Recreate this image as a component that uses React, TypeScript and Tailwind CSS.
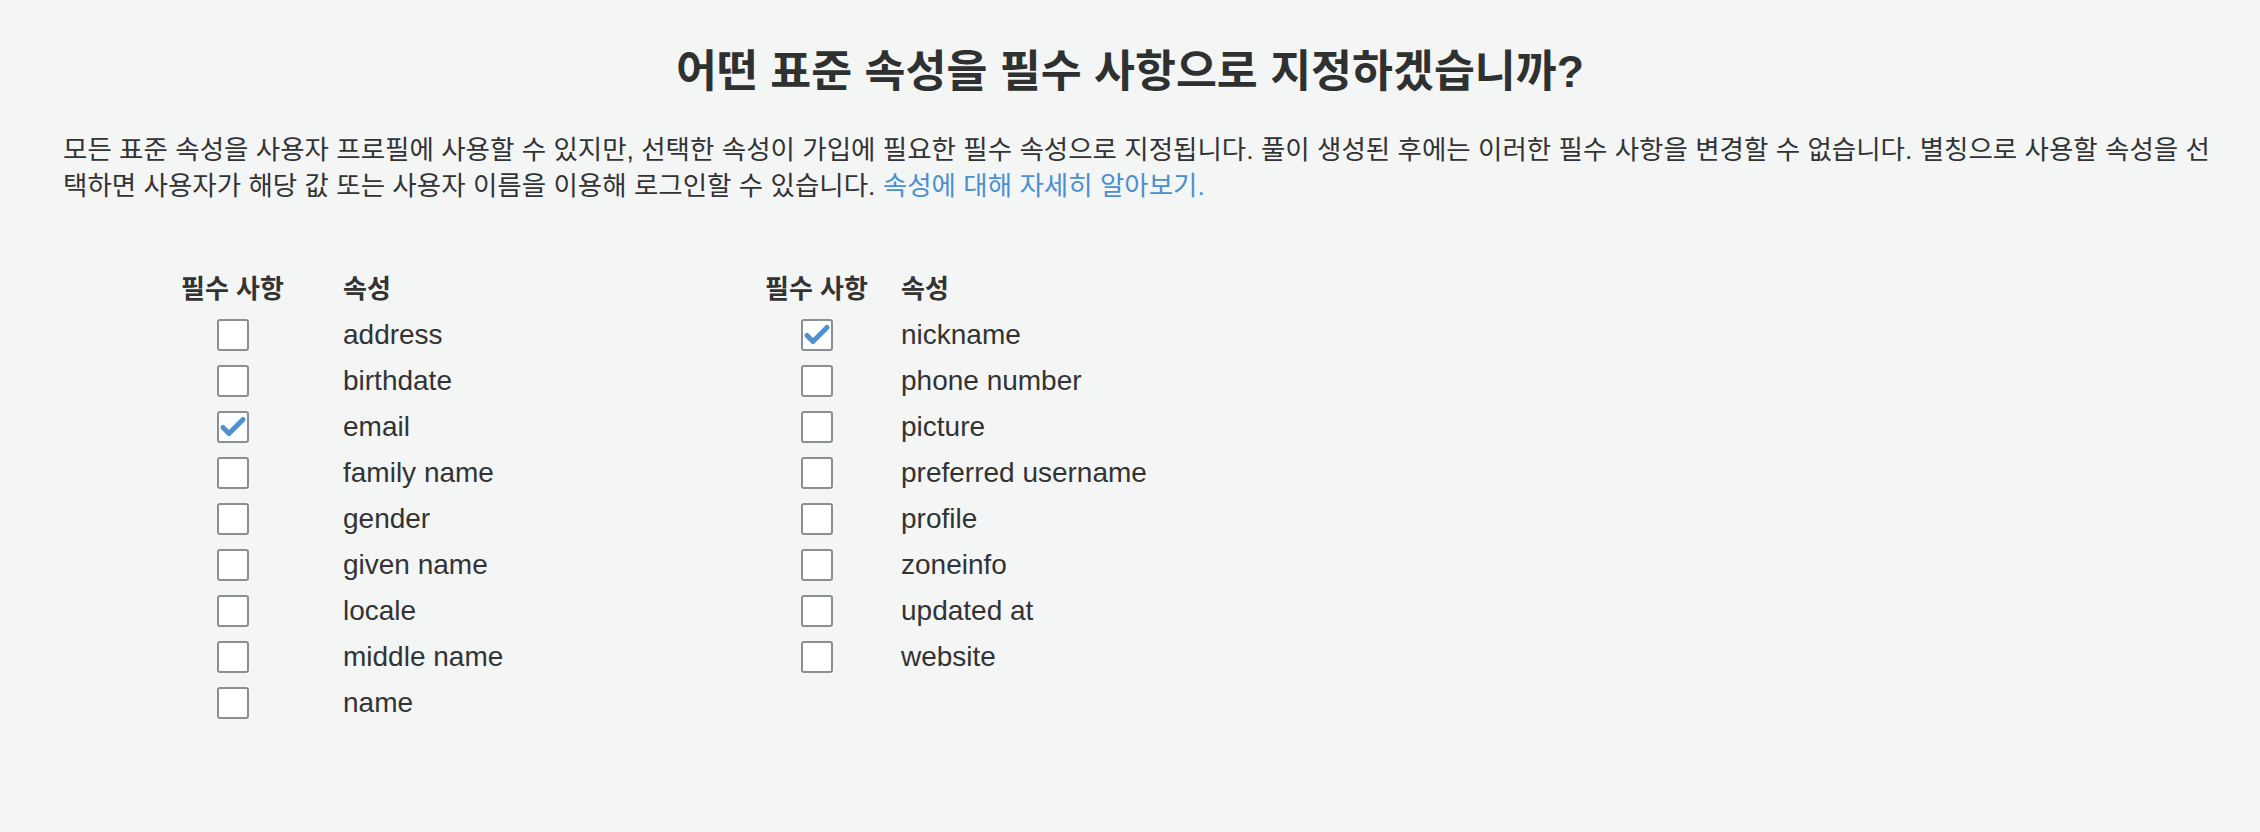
import React from "react";

const left: [string, boolean][] = [
  ["address", false],
  ["birthdate", false],
  ["email", true],
  ["family name", false],
  ["gender", false],
  ["given name", false],
  ["locale", false],
  ["middle name", false],
  ["name", false],
];

const right: [string, boolean][] = [
  ["nickname", true],
  ["phone number", false],
  ["picture", false],
  ["preferred username", false],
  ["profile", false],
  ["zoneinfo", false],
  ["updated at", false],
  ["website", false],
];

function Box({ checked }: { checked: boolean }) {
  return (
    <div className="w-[32px] h-[32px] rounded-[3px] border-2 border-[#8b8e92] bg-white flex items-center justify-center">
      {checked && (
        <svg width="28" height="28" viewBox="0 0 28 28" fill="none">
          <path d="M4 14.5 L10 20.5 L24 6.5" stroke="#4d91d0" strokeWidth="5" strokeLinecap="round" strokeLinejoin="round" />
        </svg>
      )}
    </div>
  );
}

function AttrTable({ rows, col1 }: { rows: [string, boolean][]; col1: string }) {
  return (
    <div className="flex flex-col">
      <div className="flex h-[46px] items-center">
        <div className={`${col1} text-[26px] font-bold font-['Liberation_Sans','Noto_Sans_CJK_KR',sans-serif]`}>필수 사항</div>
        <div className="text-[26px] font-bold font-['Liberation_Sans','Noto_Sans_CJK_KR',sans-serif]">속성</div>
      </div>
      {rows.map(([name, checked]) => (
        <div key={name} className="flex h-[46px] items-center">
          <div className={`${col1} flex`}>
            <div className="w-[104px] flex justify-center">
              <Box checked={checked} />
            </div>
          </div>
          <div className="text-[28px] font-['Liberation_Sans',sans-serif] text-[#333333]">{name}</div>
        </div>
      ))}
    </div>
  );
}

export default function App() {
  return (
    <div className="min-h-screen bg-[#f4f6f6] px-[63px] pt-[40px] text-[#333333] font-['Liberation_Sans','Noto_Sans_CJK_KR',sans-serif]">
      <h1 className="text-center text-[44.5px] font-bold leading-[64px] text-[#2f3131]">
        어떤 표준 속성을 필수 사항으로 지정하겠습니까?
      </h1>
      <p className="mt-[28px] -mr-[30px] text-[26.5px] leading-[36px] text-[#333333]">
        모든 표준 속성을 사용자 프로필에 사용할 수 있지만, 선택한 속성이 가입에 필요한 필수 속성으로 지정됩니다. 풀이 생성된 후에는 이러한 필수 사항을 변경할 수 없습니다. 별칭으로 사용할 속성을 선
        <br />
        택하면 사용자가 해당 값 또는 사용자 이름을 이용해 로그인할 수 있습니다.{" "}
        <a className="text-[#4b8fd0]">속성에 대해 자세히 알아보기.</a>
      </p>
      <div className="flex pl-[118px] mt-[62px]">
        <div className="w-[584px]">
          <AttrTable rows={left} col1="w-[162px]" />
        </div>
        <div>
          <AttrTable rows={right} col1="w-[136px]" />
        </div>
      </div>
    </div>
  );
}
